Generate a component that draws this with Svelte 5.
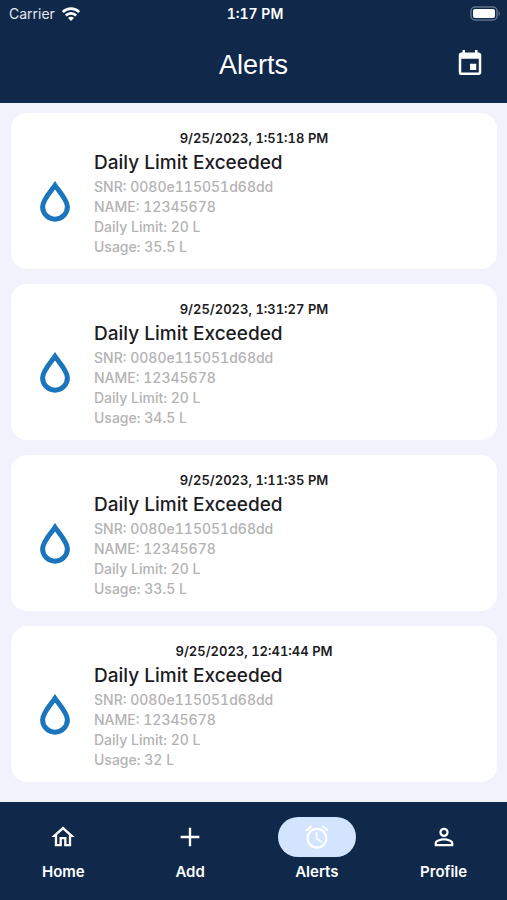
<script>

	const snr  = '0080e115051d68dd';
	const name = '12345678';

	let alerts = [
		{ date: '9/25/2023, 1:51:18 PM', title: 'Daily Limit Exceeded', snr, name, limit: '20 L', usage: '35.5 L' },
		{ date: '9/25/2023, 1:31:27 PM', title: 'Daily Limit Exceeded', snr, name, limit: '20 L', usage: '34.5 L' },
		{ date: '9/25/2023, 1:11:35 PM', title: 'Daily Limit Exceeded', snr, name, limit: '20 L', usage: '33.5 L' },
		{ date: '9/25/2023, 12:41:44 PM', title: 'Daily Limit Exceeded', snr, name, limit: '20 L', usage: '32 L' },
	];

	const tabs = [
		{
			label: 'Home',
			icon: 'M12 5.69l5 4.5V18h-2v-6H9v6H7v-7.81l5-4.5M12 3L2 12h3v8h6v-6h2v6h6v-8h3L12 3z'
		},
		{
			label: 'Add',
			icon: 'M20 13h-7v7h-2v-7H4v-2h7V4h2v7h7v2z'
		},
		{
			label: 'Alerts',
			icon: 'M22 5.72l-4.6-3.86-1.29 1.53 4.6 3.86L22 5.72zM7.88 3.39L6.6 1.86 2 5.71l1.29 1.53 4.59-3.85zM12.5 8H11v6l4.75 2.85.75-1.23-4-2.37V8zM12 4c-4.97 0-9 4.03-9 9s4.02 9 9 9c4.97 0 9-4.03 9-9s-4.03-9-9-9zm0 16c-3.87 0-7-3.13-7-7s3.13-7 7-7 7 3.13 7 7-3.13 7-7 7z'
		},
		{
			label: 'Profile',
			icon: 'M12 4a4 4 0 1 1 0 8 4 4 0 0 1 0-8m0 1.9a2.1 2.1 0 1 0 0 4.2 2.1 2.1 0 0 0 0-4.2M12 13c2.67 0 8 1.34 8 4v3H4v-3c0-2.66 5.33-4 8-4m0 1.9c-2.97 0-6.1 1.46-6.1 2.1v1.1h12.2V17c0-.64-3.13-2.1-6.1-2.1z'
		},
	];

	let active = 'Alerts';

</script>

<div class="app">

	<header>
		<div class="status">
			<div class="carrier">
				<span>Carrier</span>
				<svg width="18" height="14" viewBox="0 0 18 14" fill="none" stroke="#fff" stroke-width="2.6" aria-hidden="true">
					<path d="M.8 5a11.6 11.6 0 0 1 16.400 0M3.800 8.500a7.400 7.400 0 0 1 10.400 0" />
					<path d="M9 14L6 11a4.200 4.200 0 0 1 6 0z" fill="#fff" stroke="none" />
				</svg>
			</div>
			<div class="time">1:17 PM</div>
			<div class="battery">
				<svg width="31" height="15" viewBox="0 0 31 15" aria-hidden="true">
					<rect x="1" y="1" width="26" height="13" rx="4" fill="#10294b" stroke="#5f718a" stroke-width="1.5" />
					<rect x="3" y="3" width="22" height="9" rx="2" fill="#fff" />
					<path d="M28.5 5.2c1.8.6 1.8 4 0 4.6z" fill="#5f718a" />
				</svg>
			</div>
		</div>
		<div class="bar">
			<h1>Alerts</h1>
			<button class="calendar" aria-label="Pick a date">
				<svg width="30" height="30" viewBox="0 2 24 24" fill="#fff" aria-hidden="true">
					<path d="M19 4h-1V2h-2v2H8V2H6v2H5c-1.11 0-1.99.9-1.99 2L3 20a2 2 0 0 0 2 2h14c1.1 0 2-.9 2-2V6c0-1.1-.9-2-2-2zm0 16H5V9h14v11zM12 13h5v5h-5z" />
				</svg>
			</button>
		</div>
	</header>

	<main>
		{#each alerts as alert}
			<article>
				<time>{alert.date}</time>
				<div class="body">
					<svg width="30" height="44" viewBox="0 0 30 44" fill="none" stroke="#1b75bc" stroke-width="5" aria-hidden="true">
						<path d="M15 4.4C11.5 9.6 2.6 18.8 2.6 25.800a12.400 12.400 0 0 0 24.800 0C27.4 18.8 18.5 9.6 15 4.4z" />
					</svg>
					<div class="text">
						<h2>{alert.title}</h2>
						<p>SNR: {alert.snr}</p>
						<p>NAME: {alert.name}</p>
						<p>Daily Limit: {alert.limit}</p>
						<p>Usage: {alert.usage}</p>
					</div>
				</div>
			</article>
		{/each}
	</main>

	<nav>
		{#each tabs as tab}
			<button class="tab" class:active={tab.label === active} on:click={() => active = tab.label}>
				<span class="pill">
					<svg width="28" height="28" viewBox="0 0 24 24" fill="#fff" aria-hidden="true">
						<path d={tab.icon} />
					</svg>
				</span>
				<span>{tab.label}</span>
			</button>
		{/each}
	</nav>

</div>

<style>

	:global(body) {
		margin: 0;
		background: #f1f2fb;
	}

	.app {
		display: flex;
		flex-direction: column;
		min-height: 100vh;
		font-family: Inter, "Liberation Sans", sans-serif;
		font-variant-numeric: tabular-nums;
		color: #1c1b1f;
	}

	h1, h2, p {
		margin: 0;
	}

	button {
		border: 0;
		padding: 0;
		background: none;
		color: inherit;
		font-family: inherit;
		cursor: pointer;
	}

	svg {
		display: block;
	}

	header {
		position: sticky;
		top: 0;
		z-index: 1;
		background: #10294b;
		color: #fff;
	}

	.status {
		display: grid;
		grid-template-columns: 1fr auto 1fr;
		align-items: center;
		height: 27px;
		padding: 0 6px 0 9px;
		font-size: 14px;
	}

	.carrier {
		display: flex;
		align-items: center;
		gap: 7px;
		color: #e4e8ee;
	}

	.time {
		font-weight: 600;
	}

	.battery {
		justify-self: end;
	}

	.bar {
		display: grid;
		grid-template-columns: 1fr auto 1fr;
		align-items: center;
		height: 76px;
		padding: 0 22px;
	}

	h1 {
		grid-column: 2;
		font-family: "Liberation Sans", Arial, sans-serif;
		font-size: 27px;
		font-weight: 400;
	}

	.calendar {
		justify-self: end;
	}

	main {
		flex: 1;
		display: flex;
		flex-direction: column;
		gap: 15px;
		padding: 10px 10px 19px 11px;
	}

	article {
		padding: 15px 12px 12px 29px;
		border-radius: 16px;
		background: #fff;
	}

	time {
		display: block;
		margin: 0 17px 1px 0;
		font-size: 13px;
		font-weight: 600;
		line-height: 20px;
		text-align: center;
	}

	.body {
		display: flex;
		align-items: center;
		gap: 24px;
	}

	h2 {
		font-size: 19px;
		font-weight: 500;
		line-height: 28px;
	}

	p {
		color: #b3b3b3;
		font-size: 14px;
		font-weight: 500;
		line-height: 20px;
	}

	nav {
		position: sticky;
		bottom: 0;
		display: grid;
		grid-template-columns: repeat(4, 1fr);
		padding: 15px 0 18px;
		background: #10294b;
		color: #fff;
	}

	.tab {
		display: flex;
		flex-direction: column;
		align-items: center;
		gap: 5px;
		font-size: 15px;
		font-weight: 600;
		line-height: 20px;
	}

	.pill {
		display: flex;
		align-items: center;
		justify-content: center;
		width: 78px;
		height: 40px;
		border-radius: 20px;
	}

	.tab.active .pill {
		background: #d3e4ff;
	}

</style>
